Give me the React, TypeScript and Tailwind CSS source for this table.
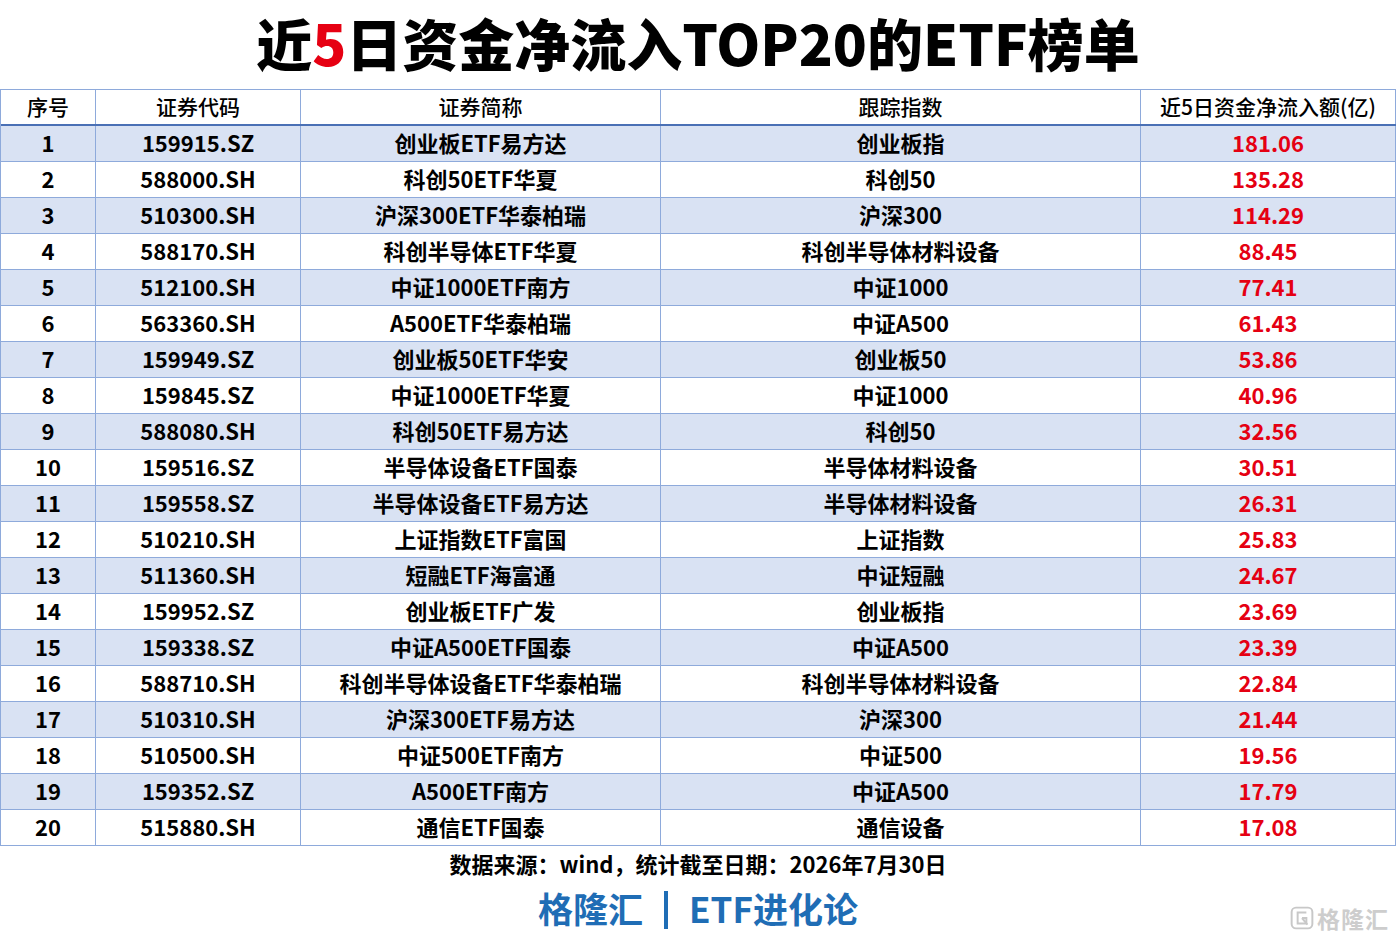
import React from "react";

const rows: [string, string, string, string, string][] = [
  ["1", "159915.SZ", "创业板ETF易方达", "创业板指", "181.06"],
  ["2", "588000.SH", "科创50ETF华夏", "科创50", "135.28"],
  ["3", "510300.SH", "沪深300ETF华泰柏瑞", "沪深300", "114.29"],
  ["4", "588170.SH", "科创半导体ETF华夏", "科创半导体材料设备", "88.45"],
  ["5", "512100.SH", "中证1000ETF南方", "中证1000", "77.41"],
  ["6", "563360.SH", "A500ETF华泰柏瑞", "中证A500", "61.43"],
  ["7", "159949.SZ", "创业板50ETF华安", "创业板50", "53.86"],
  ["8", "159845.SZ", "中证1000ETF华夏", "中证1000", "40.96"],
  ["9", "588080.SH", "科创50ETF易方达", "科创50", "32.56"],
  ["10", "159516.SZ", "半导体设备ETF国泰", "半导体材料设备", "30.51"],
  ["11", "159558.SZ", "半导体设备ETF易方达", "半导体材料设备", "26.31"],
  ["12", "510210.SH", "上证指数ETF富国", "上证指数", "25.83"],
  ["13", "511360.SH", "短融ETF海富通", "中证短融", "24.67"],
  ["14", "159952.SZ", "创业板ETF广发", "创业板指", "23.69"],
  ["15", "159338.SZ", "中证A500ETF国泰", "中证A500", "23.39"],
  ["16", "588710.SH", "科创半导体设备ETF华泰柏瑞", "科创半导体材料设备", "22.84"],
  ["17", "510310.SH", "沪深300ETF易方达", "沪深300", "21.44"],
  ["18", "510500.SH", "中证500ETF南方", "中证500", "19.56"],
  ["19", "159352.SZ", "A500ETF南方", "中证A500", "17.79"],
  ["20", "515880.SH", "通信ETF国泰", "通信设备", "17.08"],
];

const font = "font-['Noto_Sans_CJK_SC','Noto_Sans',sans-serif]";
const grid = "grid grid-cols-[95px_205px_360px_480px_1fr]";

export default function App() {
  return (
    <div className={`w-[1396px] h-[941px] bg-white ${font} text-black relative overflow-hidden`}>
      <div className="h-[89px] flex items-center justify-center">
        <h1 className="text-[56px] font-black leading-none mt-[-5px]">
          近<span className="text-[#e60012]">5</span>日资金净流入TOP20的ETF榜单
        </h1>
      </div>
      <div className="border-t border-l border-[#8eaadb] w-[1396px]">
        <div className={`${grid} h-[36px] border-b-2 border-b-[#4a70b5] text-[21px] font-medium`}>
          {["序号", "证券代码", "证券简称", "跟踪指数", "近5日资金净流入额(亿)"].map((h, i) => (
            <div key={i} className="flex items-center justify-center border-r border-[#8eaadb] leading-none pb-[2px]">
              {h}
            </div>
          ))}
        </div>
        {rows.map((r, idx) => (
          <div
            key={idx}
            className={`${grid} h-[36px] border-b border-[#8eaadb] text-[22px] font-bold ${idx % 2 === 0 ? "bg-[#d9e2f3]" : "bg-white"}`}
          >
            {r.map((c, i) => (
              <div
                key={i}
                className={`flex items-center justify-center border-r border-[#8eaadb] leading-none pb-[3px] ${i === 4 ? "text-[#e50012]" : ""}`}
              >
                {c}
              </div>
            ))}
          </div>
        ))}
      </div>
      <div className="flex justify-center mt-[2px]">
        <p className="text-[22px] font-bold leading-[30px]">数据来源：wind，统计截至日期：2026年7月30日</p>
      </div>
      <div className="flex justify-center items-center mt-[6px] h-[46px] text-[#1f6db5]">
        <span className="text-[35px] font-bold leading-none">格隆汇</span>
        <span className="inline-block w-[4px] h-[38px] bg-[#1f6db5] mx-[21px] mt-[6px]" />
        <span className="text-[35px] font-bold leading-none">ETF进化论</span>
      </div>
      <div className="absolute right-[7px] bottom-[11px] flex items-center gap-[3px] text-[#cdcdcd]">
        <svg width="24" height="24" viewBox="0 0 22 22" fill="none" stroke="#c8c8c8" strokeWidth="1.8">
          <rect x="1.5" y="1.5" width="19" height="19" rx="4" />
          <path d="M15 6H7v10h8v-5h-4" />
          <path d="M11 11l5 6" />
        </svg>
        <span className="text-[23px] font-bold leading-none tracking-[1px]">格隆汇</span>
      </div>
    </div>
  );
}
